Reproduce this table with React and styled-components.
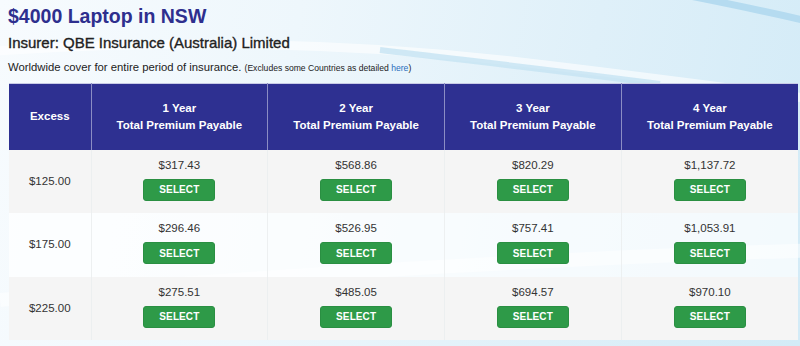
import React from "react";
import styled, { createGlobalStyle } from "styled-components";

const Global = createGlobalStyle`
  html, body { margin: 0; padding: 0; }
  body {
    width: 800px;
    height: 346px;
    overflow: hidden;
    font-family: "Liberation Sans", Arial, Helvetica, sans-serif;
    background: linear-gradient(100deg, #f7fbfe 0%, #eef7fc 35%, #dff0f9 70%, #d3ebf7 100%);
  }
`;

const Page = styled.div`
  position: relative;
  width: 800px;
  height: 346px;
  box-sizing: border-box;
  padding: 5px 2px 0 8px;
`;

const Backdrop = styled.svg`
  position: absolute;
  inset: 0;
  width: 800px;
  height: 346px;
  z-index: 0;
  pointer-events: none;
`;

const Content = styled.div`
  position: relative;
  z-index: 1;
`;

const Title = styled.h1`
  margin: 0;
  font-size: 19.5px;
  line-height: 22px;
  font-weight: bold;
  color: #2e2f8e;
`;

const Insurer = styled.h2`
  margin: 7px 0 0;
  font-size: 15px;
  line-height: 18px;
  font-weight: normal;
  color: #222;
  -webkit-text-stroke: 0.35px #222;
`;

const Note = styled.p`
  margin: 7.5px 0 0;
  font-size: 11.3px;
  line-height: 14px;
  color: #222;
`;

const Small = styled.span`
  font-size: 8.6px;
`;

const Link = styled.a`
  color: #2a6ebb;
  text-decoration: none;
`;

const Table = styled.table`
  margin: 8px 0 0 1px;
  width: 789px;
  border-collapse: collapse;
  table-layout: fixed;
`;

const Head = styled.th`
  background: #2e3091;
  color: #fff;
  font-size: 11.5px;
  line-height: 17px;
  font-weight: bold;
  text-align: center;
  vertical-align: middle;
  height: 66px;
  padding: 0;
  border-top: 1px solid #c9cbe6;
  border-left: 1px solid #8b8dc4;
  border-right: 1px solid #8b8dc4;
  &:first-child { border-left: none; }
  &:last-child { border-right: none; }
`;

const Row = styled.tr`
  background: ${(p) => (p.$alt ? "rgba(255,255,255,0.72)" : "#f5f5f5")};
`;

const Cell = styled.td`
  padding: 7px 0 12.5px;
  height: 44px;
  text-align: center;
  vertical-align: middle;
  font-size: 11.5px;
  line-height: 17px;
  color: #333;
  border-left: 1px solid rgba(235, 238, 240, 0.9);
  &:first-child { border-left: none; padding: 0; }
`;

const Price = styled.div`
  height: 17px;
`;

const SelectButton = styled.button`
  display: block;
  margin: 5px auto 0;
  width: 72px;
  height: 22px;
  padding: 0;
  border: 1px solid #2a8f42;
  border-radius: 3px;
  background: #2e9a48;
  color: #fff;
  font-family: "Liberation Sans", Arial, Helvetica, sans-serif;
  font-size: 10px;
  font-weight: bold;
  letter-spacing: 0.1px;
  cursor: pointer;
`;

const rows = [
  { excess: "$125.00", prices: ["$317.43", "$568.86", "$820.29", "$1,137.72"] },
  { excess: "$175.00", prices: ["$296.46", "$526.95", "$757.41", "$1,053.91"] },
  { excess: "$225.00", prices: ["$275.51", "$485.05", "$694.57", "$970.10"] },
];

export default function App() {
  return (
    <>
      <Global />
      <Page>
        <Backdrop viewBox="0 0 800 346">
          <path d="M -20 52 C 150 40, 330 40, 520 62 C 640 76, 730 88, 820 100" stroke="#ffffff" strokeOpacity="0.6" strokeWidth="9" fill="none" />
          <path d="M 380 50 C 480 62, 570 72, 660 84" stroke="#c6e3f3" strokeOpacity="0.8" strokeWidth="6" fill="none" />
          <path d="M 690 -4 C 730 4, 770 12, 820 24" stroke="#b5dbf0" strokeWidth="7" fill="none" />
          <path d="M 0 300 C 200 280, 500 260, 820 250" stroke="#ffffff" strokeOpacity="0.5" strokeWidth="14" fill="none" />
        </Backdrop>
        <Content>
          <Title>$4000 Laptop in NSW</Title>
          <Insurer>Insurer: QBE Insurance (Australia) Limited</Insurer>
          <Note>
            Worldwide cover for entire period of insurance.{" "}
            <Small>
              (Excludes some Countries as detailed <Link href="#">here</Link>)
            </Small>
          </Note>
          <Table>
            <colgroup>
              <col style={{ width: "82px" }} />
              <col />
              <col />
              <col />
              <col />
            </colgroup>
            <thead>
              <tr>
                <Head>Excess</Head>
                {[1, 2, 3, 4].map((y) => (
                  <Head key={y}>
                    {y} Year
                    <br />
                    Total Premium Payable
                  </Head>
                ))}
              </tr>
            </thead>
            <tbody>
              {rows.map((r, i) => (
                <Row key={r.excess} $alt={i === 1}>
                  <Cell>{r.excess}</Cell>
                  {r.prices.map((p) => (
                    <Cell key={p}>
                      <Price>{p}</Price>
                      <SelectButton>SELECT</SelectButton>
                    </Cell>
                  ))}
                </Row>
              ))}
            </tbody>
          </Table>
        </Content>
      </Page>
    </>
  );
}
